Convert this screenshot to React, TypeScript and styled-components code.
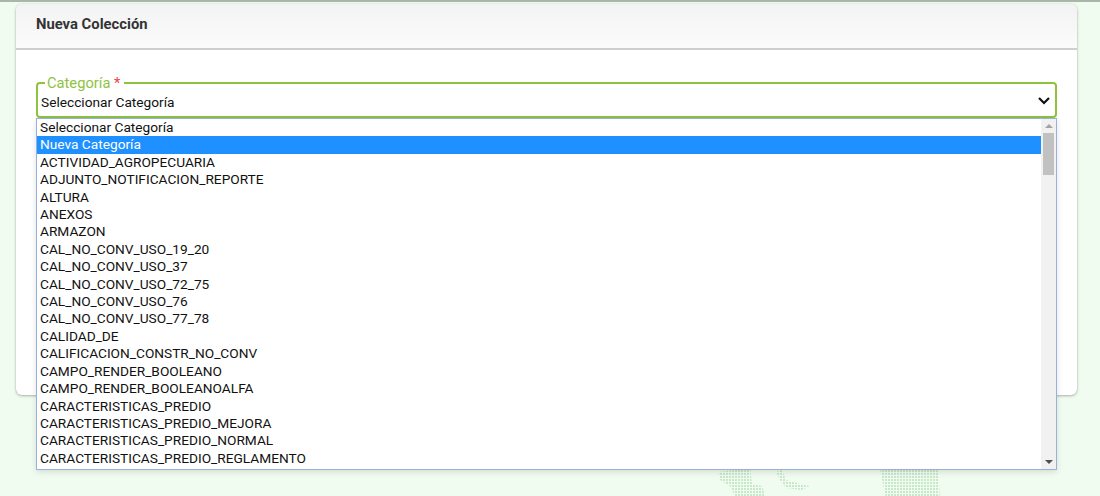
import React from "react";
import styled, { createGlobalStyle } from "styled-components";

const GlobalStyle = createGlobalStyle`
  html, body { margin: 0; padding: 0; }
  body { background: #effcef; font-family: Roboto, "Liberation Sans", Arial, sans-serif; }
`;

const Page = styled.div`
  position: relative;
  height: 496px;
  overflow: hidden;
  background: #effcef;
  border-top: 2px solid #aab6aa;
  box-sizing: border-box;
`;

const Decoration = styled.svg`
  position: absolute;
  left: 690px;
  top: 462px;
  width: 260px;
  height: 34px;
`;

const Card = styled.section`
  position: relative;
  margin: 2px 23px 0 16px;
  height: 391px;
  background: #fff;
  border-radius: 6px;
  box-shadow: 0 1px 3px rgba(0, 0, 0, 0.28), 0 0 1px rgba(0, 0, 0, 0.2);
`;

const CardHeader = styled.header`
  height: 44px;
  display: flex;
  align-items: center;
  padding: 0 20px;
  background: linear-gradient(180deg, #f3f3f3 0%, #fbfbfb 100%);
  border-bottom: 2px solid #cfcfcf;
  border-radius: 6px 6px 0 0;
`;

const Title = styled.h2`
  margin: 0;
  font-family: Roboto, "Liberation Sans", Arial, sans-serif;
  font-weight: 700;
  font-size: 14.8px;
  color: #333;
  padding-bottom: 4px;
`;

const CardBody = styled.div`
  padding: 26px 20px 0 20px;
`;

const Field = styled.fieldset`
  position: relative;
  margin: 0;
  padding: 0 4px 0 3px;
  height: 42px;
  border: 2px solid #8dc33f;
  border-radius: 4px;
  display: flex;
  align-items: center;
  justify-content: space-between;
  box-sizing: border-box;
  min-width: 0;
`;

const Legend = styled.legend`
  padding: 0 4px 0 2px;
  margin-left: 4px;
  font-size: 14.7px;
  line-height: 14px;
  color: #8dc33f;
`;

const Required = styled.span`
  color: #f0443a;
`;

const Value = styled.span`
  font-size: 13.7px;
  color: #111;
  margin-top: -3px;
`;

const Chevron = styled.svg`
  width: 14px;
  height: 10px;
  margin-top: -4px;
`;

const Popup = styled.div`
  position: absolute;
  left: -2px;
  top: calc(100% + 2px);
  width: 1021px;
  height: 352px;
  box-sizing: border-box;
  border: 1px solid #99b0df;
  background: #fff;
  display: flex;
  box-shadow: 0 2px 6px rgba(0, 0, 0, 0.12);
  z-index: 5;
`;

const OptionList = styled.ul`
  list-style: none;
  margin: 0;
  padding: 0;
  flex: 1;
  overflow: hidden;
`;

const Option = styled.li<{ $selected?: boolean }>`
  height: 17.42px;
  line-height: 17.42px;
  padding-left: 3px;
  font-size: 13.7px;
  white-space: nowrap;
  color: ${(p) => (p.$selected ? "#fff" : "#111")};
  background: ${(p) => (p.$selected ? "#1e90ff" : "transparent")};
`;

const Scrollbar = styled.div`
  width: 15px;
  background: #f1f1f1;
  display: flex;
  flex-direction: column;
  align-items: center;
`;

const ScrollArrow = styled.div<{ $down?: boolean }>`
  height: 14px;
  display: flex;
  align-items: center;
  justify-content: center;
  &::after {
    content: "";
    border-left: 4px solid transparent;
    border-right: 4px solid transparent;
    ${(p) =>
      p.$down
        ? "border-top: 4px solid #505050;"
        : "border-bottom: 4px solid #a3a3a3;"}
  }
`;

const Track = styled.div`
  flex: 1;
  width: 100%;
  display: flex;
  justify-content: center;
`;

const Thumb = styled.div`
  width: 11px;
  height: 42px;
  background: #c1c1c1;
`;

const options = [
  "Seleccionar Categoría",
  "Nueva Categoría",
  "ACTIVIDAD_AGROPECUARIA",
  "ADJUNTO_NOTIFICACION_REPORTE",
  "ALTURA",
  "ANEXOS",
  "ARMAZON",
  "CAL_NO_CONV_USO_19_20",
  "CAL_NO_CONV_USO_37",
  "CAL_NO_CONV_USO_72_75",
  "CAL_NO_CONV_USO_76",
  "CAL_NO_CONV_USO_77_78",
  "CALIDAD_DE",
  "CALIFICACION_CONSTR_NO_CONV",
  "CAMPO_RENDER_BOOLEANO",
  "CAMPO_RENDER_BOOLEANOALFA",
  "CARACTERISTICAS_PREDIO",
  "CARACTERISTICAS_PREDIO_MEJORA",
  "CARACTERISTICAS_PREDIO_NORMAL",
  "CARACTERISTICAS_PREDIO_REGLAMENTO",
];

export default function App() {
  return (
    <>
      <GlobalStyle />
      <Page>
        <Decoration viewBox="0 0 260 34">
          <defs>
            <pattern id="dots" width="3" height="3" patternUnits="userSpaceOnUse">
              <rect x="0" y="0" width="2" height="2" fill="#c9e8c9" />
            </pattern>
          </defs>
          <path d="M28 8 L60 4 L62 20 L72 22 L76 34 L46 34 L40 22 L30 16 Z" fill="url(#dots)" />
          <path d="M86 8 L92 6 L96 16 L110 20 L120 22 L112 26 L96 24 L90 16 Z" fill="url(#dots)" />
          <path d="M190 6 L248 2 L250 34 L196 34 Z" fill="url(#dots)" />
        </Decoration>
        <Card>
          <CardHeader>
            <Title>Nueva Colección</Title>
          </CardHeader>
          <CardBody>
            <Field>
              <Legend>
                Categoría <Required>*</Required>
              </Legend>
              <Value>Seleccionar Categoría</Value>
              <Chevron viewBox="0 0 14 10">
                <polyline points="2,2 7,7 12,2" fill="none" stroke="#111" strokeWidth="2.2" />
              </Chevron>
              <Popup>
                <OptionList>
                  {options.map((o, i) => (
                    <Option key={o} $selected={i === 1}>
                      {o}
                    </Option>
                  ))}
                </OptionList>
                <Scrollbar>
                  <ScrollArrow />
                  <Track>
                    <Thumb />
                  </Track>
                  <ScrollArrow $down />
                </Scrollbar>
              </Popup>
            </Field>
          </CardBody>
        </Card>
      </Page>
    </>
  );
}
